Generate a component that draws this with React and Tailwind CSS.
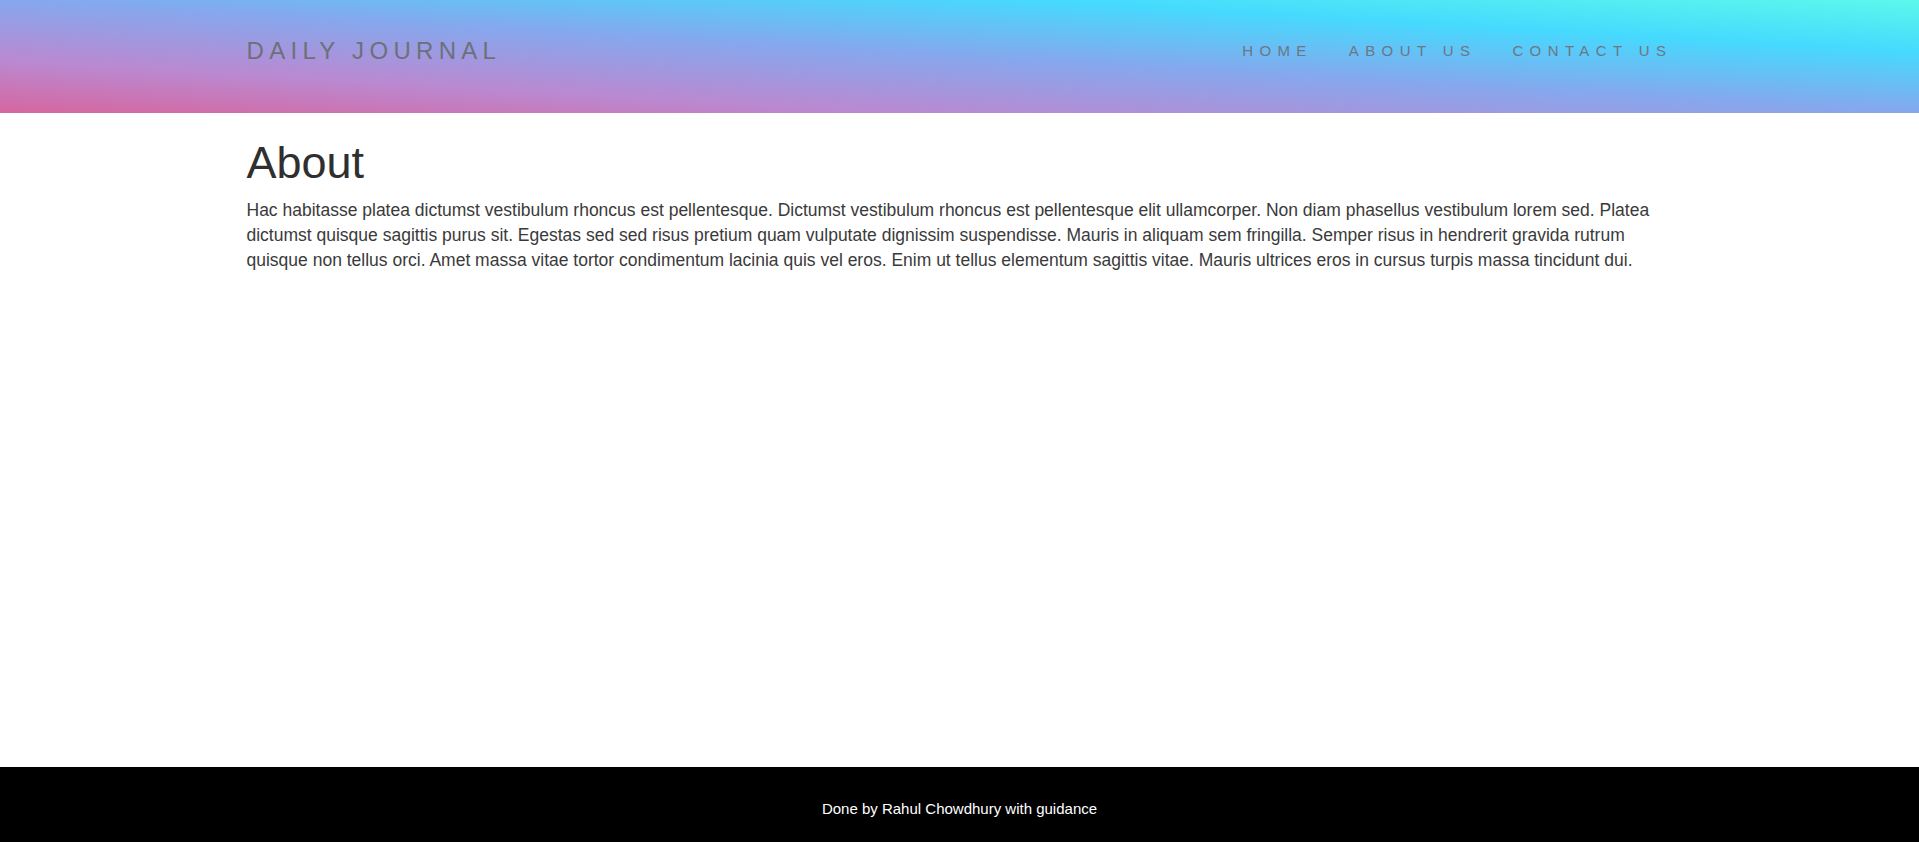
const NAV_LINKS = ['Home', 'About Us', 'Contact Us'];

const App = () => {
  return (
    <div className="flex h-[844px] flex-col bg-white font-['Liberation_Sans',Arial,sans-serif]">
      {/* Header */}
      <header className="h-[113px] shrink-0 bg-[linear-gradient(to_top_right,#d6669f,#b98ad2_24%,#86a7ed_50%,#45dafe_77%,#5cf8ec)]">
        <div className="mx-auto flex h-[101px] w-[1426px] items-center justify-between">
          <a href="#" className="text-[24px] leading-[24px] tracking-[5.3px] text-[#6c7179] uppercase">
            Daily Journal
          </a>
          <nav className="flex gap-[36px]">
            {NAV_LINKS.map((label) => (
              <a
                key={label}
                href="#"
                className="text-[15px] leading-[15px] tracking-[6.4px] text-[#6c7782] uppercase"
              >
                {label}
              </a>
            ))}
          </nav>
        </div>
      </header>

      {/* Content */}
      <main className="flex-1">
        <div className="mx-auto w-[1426px] pt-[25px]">
          <h1 className="text-[45px] leading-[50px] font-normal text-[#2f2f2f]">About</h1>
          <p className="mt-[10px] text-[17.5px] leading-[25px] text-[#3a3a3a]">
            Hac habitasse platea dictumst vestibulum rhoncus est pellentesque. Dictumst vestibulum rhoncus est
            pellentesque elit ullamcorper. Non diam phasellus vestibulum lorem sed. Platea dictumst quisque sagittis
            purus sit. Egestas sed sed risus pretium quam vulputate dignissim suspendisse. Mauris in aliquam sem
            fringilla. Semper risus in hendrerit gravida rutrum quisque non tellus orci. Amet massa vitae tortor
            condimentum lacinia quis vel eros. Enim ut tellus elementum sagittis vitae. Mauris ultrices eros in cursus
            turpis massa tincidunt dui.
          </p>
        </div>
      </main>

      {/* Footer */}
      <footer className="mb-[2px] h-[75px] shrink-0 bg-black pt-[33px] text-center">
        <p className="text-[15px] leading-[17px] text-white">Done by Rahul Chowdhury with guidance</p>
      </footer>
    </div>
  );
};

export default App;
